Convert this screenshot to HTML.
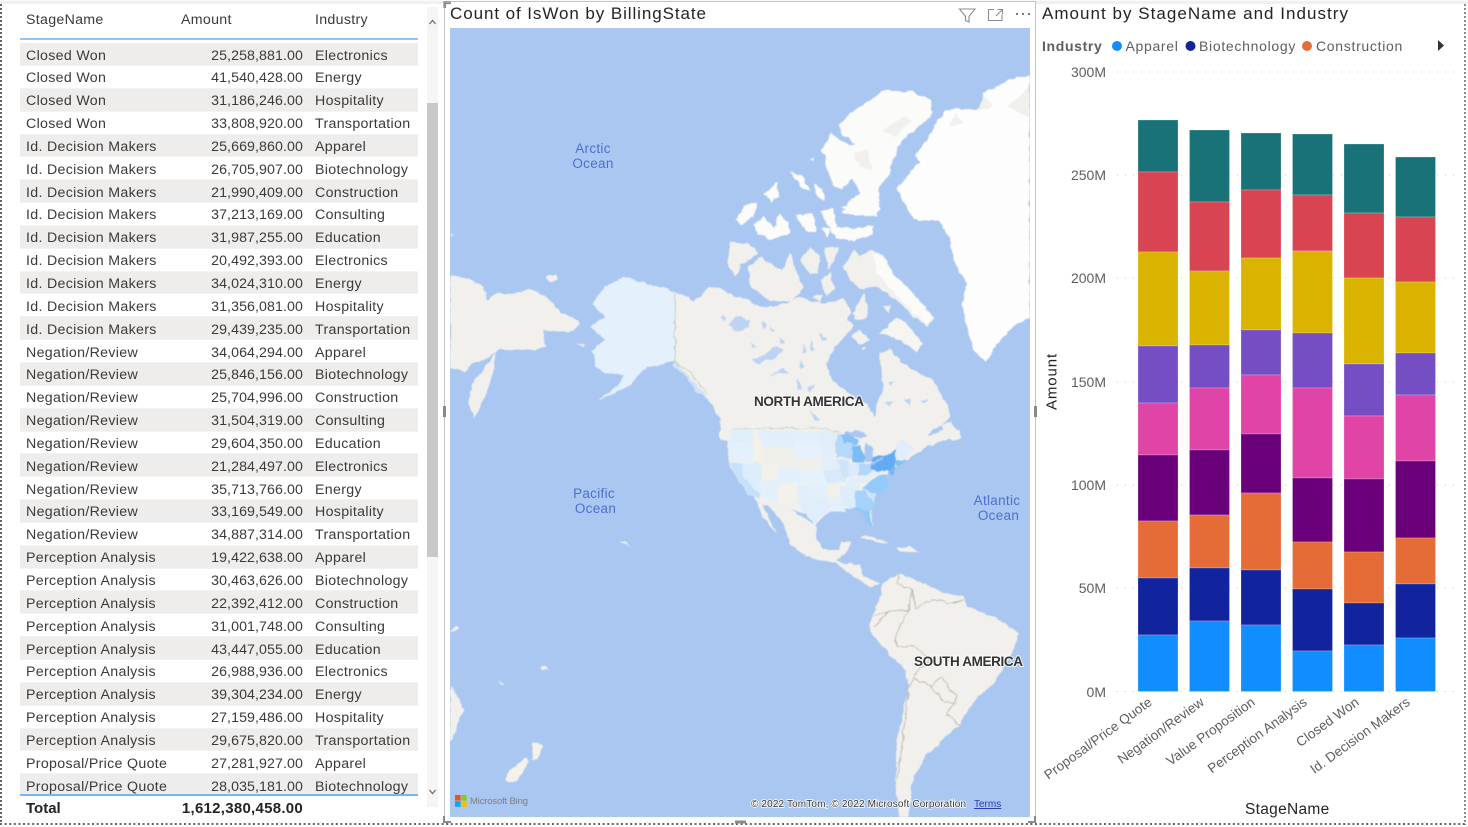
<!DOCTYPE html>
<html><head><meta charset="utf-8"><style>
html,body{margin:0;padding:0;background:#fff}
body{width:1468px;height:827px;position:relative;overflow:hidden;font-family:"Liberation Sans",sans-serif}
#t{position:absolute;left:20px;top:43.2px;width:398px;height:751px;overflow:hidden}
.r{height:22.85px;position:relative;font-size:14.2px;color:#3b3a39;line-height:23px;letter-spacing:.32px;white-space:nowrap;box-sizing:border-box;border-bottom:1px solid #f3f3f3}
.r.g{background:#eeedec}
.r b{font-weight:normal;position:absolute;top:1.4px}
.a{left:6px}.m{right:115px;letter-spacing:.09px}.c{left:295px}
.h{position:absolute;top:10.5px;font-size:14.2px;letter-spacing:.3px;color:#3b3a39;line-height:18px}
svg{position:absolute;left:0;top:0}
</style></head><body>
<div class="h" style="left:26px">StageName</div><div class="h" style="left:181px">Amount</div><div class="h" style="left:315px">Industry</div>
<div style="position:absolute;left:20px;top:37.5px;width:398px;height:2px;background:#8ec8fa"></div>
<div id="t">
<div class="r g"><b class="a">Closed Won</b><b class="m">25,258,881.00</b><b class="c">Electronics</b></div>
<div class="r"><b class="a">Closed Won</b><b class="m">41,540,428.00</b><b class="c">Energy</b></div>
<div class="r g"><b class="a">Closed Won</b><b class="m">31,186,246.00</b><b class="c">Hospitality</b></div>
<div class="r"><b class="a">Closed Won</b><b class="m">33,808,920.00</b><b class="c">Transportation</b></div>
<div class="r g"><b class="a">Id. Decision Makers</b><b class="m">25,669,860.00</b><b class="c">Apparel</b></div>
<div class="r"><b class="a">Id. Decision Makers</b><b class="m">26,705,907.00</b><b class="c">Biotechnology</b></div>
<div class="r g"><b class="a">Id. Decision Makers</b><b class="m">21,990,409.00</b><b class="c">Construction</b></div>
<div class="r"><b class="a">Id. Decision Makers</b><b class="m">37,213,169.00</b><b class="c">Consulting</b></div>
<div class="r g"><b class="a">Id. Decision Makers</b><b class="m">31,987,255.00</b><b class="c">Education</b></div>
<div class="r"><b class="a">Id. Decision Makers</b><b class="m">20,492,393.00</b><b class="c">Electronics</b></div>
<div class="r g"><b class="a">Id. Decision Makers</b><b class="m">34,024,310.00</b><b class="c">Energy</b></div>
<div class="r"><b class="a">Id. Decision Makers</b><b class="m">31,356,081.00</b><b class="c">Hospitality</b></div>
<div class="r g"><b class="a">Id. Decision Makers</b><b class="m">29,439,235.00</b><b class="c">Transportation</b></div>
<div class="r"><b class="a">Negation/Review</b><b class="m">34,064,294.00</b><b class="c">Apparel</b></div>
<div class="r g"><b class="a">Negation/Review</b><b class="m">25,846,156.00</b><b class="c">Biotechnology</b></div>
<div class="r"><b class="a">Negation/Review</b><b class="m">25,704,996.00</b><b class="c">Construction</b></div>
<div class="r g"><b class="a">Negation/Review</b><b class="m">31,504,319.00</b><b class="c">Consulting</b></div>
<div class="r"><b class="a">Negation/Review</b><b class="m">29,604,350.00</b><b class="c">Education</b></div>
<div class="r g"><b class="a">Negation/Review</b><b class="m">21,284,497.00</b><b class="c">Electronics</b></div>
<div class="r"><b class="a">Negation/Review</b><b class="m">35,713,766.00</b><b class="c">Energy</b></div>
<div class="r g"><b class="a">Negation/Review</b><b class="m">33,169,549.00</b><b class="c">Hospitality</b></div>
<div class="r"><b class="a">Negation/Review</b><b class="m">34,887,314.00</b><b class="c">Transportation</b></div>
<div class="r g"><b class="a">Perception Analysis</b><b class="m">19,422,638.00</b><b class="c">Apparel</b></div>
<div class="r"><b class="a">Perception Analysis</b><b class="m">30,463,626.00</b><b class="c">Biotechnology</b></div>
<div class="r g"><b class="a">Perception Analysis</b><b class="m">22,392,412.00</b><b class="c">Construction</b></div>
<div class="r"><b class="a">Perception Analysis</b><b class="m">31,001,748.00</b><b class="c">Consulting</b></div>
<div class="r g"><b class="a">Perception Analysis</b><b class="m">43,447,055.00</b><b class="c">Education</b></div>
<div class="r"><b class="a">Perception Analysis</b><b class="m">26,988,936.00</b><b class="c">Electronics</b></div>
<div class="r g"><b class="a">Perception Analysis</b><b class="m">39,304,234.00</b><b class="c">Energy</b></div>
<div class="r"><b class="a">Perception Analysis</b><b class="m">27,159,486.00</b><b class="c">Hospitality</b></div>
<div class="r g"><b class="a">Perception Analysis</b><b class="m">29,675,820.00</b><b class="c">Transportation</b></div>
<div class="r"><b class="a">Proposal/Price Quote</b><b class="m">27,281,927.00</b><b class="c">Apparel</b></div>
<div class="r g"><b class="a">Proposal/Price Quote</b><b class="m">28,035,181.00</b><b class="c">Biotechnology</b></div>
</div>
<div style="position:absolute;left:20px;top:794px;width:398px;height:2px;background:#73b8f5"></div>
<div style="position:absolute;left:26px;top:799.5px;font-size:15px;font-weight:bold;color:#252423;line-height:18px">Total</div>
<div style="position:absolute;right:1165px;top:799.5px;font-size:15px;font-weight:bold;color:#252423;line-height:18px;letter-spacing:.27px">1,612,380,458.00</div>
<svg width="1468" height="827" viewBox="0 0 1468 827" font-family="Liberation Sans, sans-serif">
<defs>
<clipPath id="mc"><rect x="450" y="28" width="580" height="789"/></clipPath>
<filter id="wob" filterUnits="userSpaceOnUse" x="450" y="28" width="580" height="789" color-interpolation-filters="sRGB">
<feTurbulence type="fractalNoise" baseFrequency=".13" numOctaves="3" seed="4" result="n"/>
<feDisplacementMap in="SourceGraphic" in2="n" scale="4.5" xChannelSelector="R" yChannelSelector="G" result="d"/>
<feGaussianBlur in="d" stdDeviation=".45"/>
</filter>
</defs>
<!-- frame -->
<rect x="0" y="0" width="1468" height="4" fill="#f0f0f0"/>
<rect x="0" y="0" width="1468" height="1" fill="#fafafa"/>
<line x1="1" y1="4" x2="1" y2="825" stroke="#666" stroke-width="2" stroke-dasharray="2 2"/>
<line x1="0" y1="824" x2="1466" y2="824" stroke="#666" stroke-width="2" stroke-dasharray="2 2.6"/>
<line x1="1465" y1="4" x2="1465" y2="825" stroke="#666" stroke-width="1.5" stroke-dasharray="2 2"/>
<!-- scrollbar -->
<rect x="427" y="7" width="11" height="800" fill="#f5f5f5"/>
<rect x="427" y="103" width="11" height="454" fill="#c8c8c8"/>
<path d="M429.5 24l3-3.6 3 3.6" fill="none" stroke="#666" stroke-width="1.2"/>
<path d="M429.5 790l3 3.6 3-3.6" fill="none" stroke="#666" stroke-width="1.2"/>
<!-- map frame -->
<rect x="444" y="2" width="592" height="820" fill="#fff"/>
<path d="M444.5 2V820M1035.5 2V820M444 1.5H1036" stroke="#c2c2c2" fill="none"/>
<path d="M444 8V2H451M444 3.5H451M445.5 3V8" stroke="#8a8a8a" fill="none" stroke-width="1.2"/>
<path d="M444 816V822H451M1035 816V822H1028" stroke="#8a8a8a" fill="none" stroke-width="2"/>
<path d="M444.5 406V417M1035.5 406V417" stroke="#8a8a8a" fill="none" stroke-width="3"/>
<path d="M735 822H746" stroke="#8a8a8a" fill="none" stroke-width="3"/>
<text x="450" y="19" font-size="17" fill="#252423" letter-spacing=".92">Count of IsWon by BillingState</text>
<!-- header icons -->
<path d="M959.5 9H975L969 16.5V22L965.5 20.5V16.5Z" fill="none" stroke="#8d8d8d" stroke-width="1.1"/>
<path d="M994 9.5H988.5V20.5H1002V14.5M996 16L1002 10M997.5 9.5H1002.5V14" fill="none" stroke="#8d8d8d" stroke-width="1.1"/>
<g fill="#777"><rect x="1016" y="13" width="2" height="2"/><rect x="1022" y="13" width="2" height="2"/><rect x="1028" y="13" width="2" height="2"/></g>
<!-- map -->
<g clip-path="url(#mc)">
<rect x="450" y="28" width="580" height="789" fill="#aac7f1"/>
<g filter="url(#wob)">
<g transform="translate(450,30) scale(.3697,.3333)">
<!-- Greenland -->
<path d="M1568 135L1510 150 1470 175 1440 190 1450 215 1425 240 1400 235 1340 240 1310 285 1290 330 1260 370 1270 395 1250 420 1210 475 1240 540 1260 570 1320 570 1350 620 1365 700 1400 760 1385 830 1400 900 1415 960 1450 995 1470 960 1510 900 1568 860Z" fill="#fdfdfd"/>
<path d="M1510 230l58-60v90l-30-10zM1440 195l30 30-40 20zM1370 250l20 30-40 10z" fill="#f1f0ec"/>
<!-- Ellesmere -->
<path d="M1050 285L1095 240 1130 215 1170 182 1250 185 1300 210 1305 250 1270 290 1220 335 1195 395 1190 430 1160 470 1160 540 1110 555 1060 550 1080 510 1110 490 1090 445 1060 475 1035 465 1005 360 1030 310 1070 340 1100 345 1060 310Z" fill="#fbfbfa"/>
<path d="M1170 300l60-40 20 10-50 50zM1090 370l40-10 10 60-30-10z" fill="#f1f0ec"/>
<path d="M850 490l35-35 5 45-20 15zM920 425l30 10 25 50-25-15zM985 460l20 15 10 40-25-20zM975 385l8-5 0 15z" fill="#fbfbf9"/>
<!-- Alaska -->
<path d="M385 820L420 770 470 740 560 770 610 785 610 990 565 1005 520 1020 490 1065 400 1112 460 1060 470 1035 420 1030 395 1010 385 960 420 930 375 890 420 860Z" fill="#e4f0fb"/>
<path d="M610 990L650 1020 700 1090 700 1110 670 1090 640 1040 600 1005Z" fill="#cfe4f8"/>
<!-- Russia -->
<path d="M0 735L50 745 90 770 100 810 130 790 180 790 220 775 270 810 300 850 330 860 350 880 330 905 300 905 250 900 260 950 220 960 130 960 100 985 60 1000 40 1025 0 1015Z" fill="#f1f0ec"/>
<path d="M125 965L100 1005 60 1060 50 1120 65 1165 95 1100 120 1015Z" fill="#f1f0ec"/>
<path d="M258 740l30-5 0 15-20 5zM340 935l25 10-5 5zM0 610l8 5-8 8z" fill="#f1f0ec"/>
</g>
<!-- Canada west link -->
<path d="M675 292L694 301 709 287 722 288V440H733L705 395 676 362Z" fill="#f1f0ec"/>
<g transform="translate(720,200) scale(.3333)">
<!-- Canada mainland, coast traced around Hudson Bay -->
<path d="M0 265L40 285 80 295 120 320 170 320 200 310 240 290 280 305 320 310 370 295 395 340 380 360 400 375 375 410 345 440 320 490 335 540 400 590 445 620 465 650 472 600 490 570 480 460 510 450 550 490 600 520 640 540 690 630 690 650 660 680 610 710 720 690 720 720 0 720Z" fill="#f1f0ec"/>
<path d="M370 200L400 150 420 170 455 150 490 165 520 220 580 280 640 350 625 380 580 350 530 300 470 260 420 265 385 235Z" fill="#f1f0ec"/>
<path d="M455 155L490 170 520 222 580 282 636 350 622 376 580 340 530 285 470 215Z" fill="#fbfbf9"/>
<path d="M480 400L530 350 560 370 610 430 590 455 540 420Z" fill="#f6f5f1"/>
<path d="M85 200L125 170 185 215 210 155 250 265 215 305 150 305 90 255Z" fill="#f1f0ec"/>
<path d="M20 190L30 125 85 130 115 160 65 195 45 230Z" fill="#f1f0ec"/>
<path d="M240 180L270 140 300 170 295 220 270 225ZM310 145L358 140 340 190 325 210ZM300 240L330 215 345 270 320 285ZM280 290L305 285 300 310ZM395 410L420 390 450 420 420 435ZM400 340L430 280 445 320 440 355 405 360ZM490 320L510 315 505 340ZM425 445L440 440 435 455Z" fill="#f1f0ec"/>
<path d="M45 60L75 15 110 10 100 50 65 75ZM100 75L130 50 165 85 175 40 205 70 210 100 150 120 115 100ZM225 45L280 40 290 95 265 100ZM305 85L330 85 325 115ZM300 30L340 25 350 80 400 85 460 75 460 105 400 120 345 115ZM365 20L480 0 470 50 400 45Z" fill="#fbfbf9"/>
<!-- lakes -->
<path d="M25 375L50 350 90 360 85 385 50 395ZM95 480L130 465 170 440 190 450 160 475 120 490ZM145 530L190 505 210 520 170 522ZM230 530L250 570 235 565ZM125 365L140 375 130 390ZM150 375L165 395 155 400ZM180 410L195 430 180 430ZM90 425L110 440 95 445ZM250 430L260 455 245 460ZM270 420L285 450 272 455ZM300 400L320 415 305 425ZM270 630L300 660 285 665ZM265 560L285 550 270 580ZM490 610L520 605 510 620ZM550 600L575 595 570 620ZM600 605L625 600 610 612ZM505 545L525 545 510 555ZM240 480L255 500 240 505Z" fill="#bdd3f3"/>
<path d="M0 355L10 345 20 355 10 360Z" fill="#bdd3f3"/>
</g>
<g transform="translate(450,420) scale(.3697,.3333)">
<!-- North America south -->
<path d="M725 0L765 25 755 120 760 150 800 210 830 245 860 250 920 270 990 315 990 350 1010 390 1050 390 1060 365 1085 365 1070 400 1045 420 1065 432 1110 430 1115 465 1165 490 1140 502 1090 470 1040 430 970 410 925 380 900 310 860 255 845 255 885 340 845 290 830 245 800 210 755 130 750 60 725 0Z" fill="#f1f0ec"/>
<path d="M765 25L1010 25 1140 120 1190 95 1270 60 1330 30 1355 10 1385 55 1330 60 1310 70 1260 100 1230 125 1190 150 1180 170 1120 220 1140 260 1145 325 1130 320 1120 265 1080 265 1060 270 1020 280 990 315 960 280 920 270 860 250 830 245 800 210 760 150 755 120Z" fill="#f1f0ec"/>
<path d="M760 0H1300L1290 70 1190 95 1140 120 1010 25H765Z" fill="#f1f0ec"/>
<path d="M1330 15l25-10 30 50-45-15z" fill="#f1f0ec"/>
<path d="M1105 352l25-5 40 15 20 12-35-8zM1205 385l35-5 30 15-50 0z" fill="#f1f0ec"/>
<path d="M458 362l20 5 8 14-14-8z" fill="#f1f0ec"/>
<path d="M245 745l15-5 5 5-15 8zM130 782l15 10-5 4zM0 630l20-10 5 10-15 5z" fill="#f1f0ec"/>
<!-- South America -->
<path d="M1215 460L1170 490 1160 540 1140 590 1135 630 1170 680 1230 750 1240 800 1210 960 1205 1080 1215 1191 1240 1191 1250 1080 1290 1000 1320 980 1345 940 1375 920 1420 840 1470 790 1520 700 1540 640 1490 600 1400 560 1390 530 1340 520 1280 490Z" fill="#f1f0ec"/>
<path d="M1215 460L1210 490 1250 510 1260 565 1290 545 1330 540 1345 550 1390 540M1250 510L1240 570 1205 650 1210 680 1260 680 1295 720 1260 760 1240 800 1225 950 1210 1080M1140 590L1185 575 1240 570M1150 620L1185 575M1250 770L1300 800 1330 770 1370 830 1345 885 1380 915M1300 800L1340 850H1370" fill="none" stroke="#b8b5ae" stroke-width="2.5"/>
<!-- Aus/NZ -->
<path d="M0 800L25 835 35 870 20 920 0 975Z" fill="#f1f0ec"/>
<path d="M225 970L250 975 240 1015 220 1020ZM205 1012L215 1025 190 1065 180 1085 150 1085 155 1060Z" fill="#f4f2ea"/>
</g>
<!-- USA -->
<g transform="translate(700,380) scale(.3333)">
<path d="M90 150H160V190H88Z" fill="#dfeefb"/>
<path d="M88 190L160 192V245H88Z" fill="#e4f0fb"/>
<path d="M88 248L130 250V295L180 340 175 360 145 345 105 290Z" fill="#c6e2fb"/>
<path d="M130 250H185V320L178 335 130 295Z" fill="#dceefb"/>
<path d="M160 150H175L190 205V250L160 245Z" fill="#f2f1ea"/>
<path d="M170 150L285 152V205H190Z" fill="#e2effb"/>
<path d="M190 205H285V262L190 250Z" fill="#f0f0ea"/>
<path d="M185 250L235 260V300H185Z" fill="#f2f1ea"/>
<path d="M180 300H235V368L210 365 178 345Z" fill="#e3f0fb"/>
<path d="M235 262H300V310H235Z" fill="#e3effa"/>
<path d="M235 312H295V365L235 368Z" fill="#f3f1e9"/>
<path d="M285 152L360 155 365 195H285Z" fill="#e3effb"/>
<path d="M285 195H365V235H285Z" fill="#e7f1fb"/>
<path d="M285 235H365L370 272H300V262H285Z" fill="#f0f0ea"/>
<path d="M300 272H375L380 315 300 312Z" fill="#e6f2fb"/>
<path d="M300 315H380L385 355 325 345V318Z" fill="#e3f0fb"/>
<path d="M295 315L325 318V345L385 355 390 395 350 420 345 435 320 405 295 370 270 365 295 365Z" fill="#dfeefa"/>
<path d="M358 150L420 160 400 195 405 230 365 230Z" fill="#e0eefb"/>
<path d="M365 232H412L420 262 370 268Z" fill="#e1eefb"/>
<path d="M372 270L420 265 440 305 380 312Z" fill="#d8e9fa"/>
<path d="M382 315L425 310 420 350 385 355Z" fill="#f1f0e9"/>
<path d="M388 358L420 352V380L440 395H392Z" fill="#e4f0fb"/>
<path d="M412 240H445L448 280 435 300 420 270Z" fill="#cfe4fa"/>
<path d="M415 165H440L470 205 455 235 412 232 405 195Z" fill="#b5d9f9"/>
<path d="M420 165L445 160 475 182 470 195 440 185 430 190Z" fill="#86c1f7"/>
<path d="M458 195L480 195 497 235 490 247H455Z" fill="#7cbcf6"/>
<path d="M445 250H475V285L448 295Z" fill="#dceafa"/>
<path d="M475 250H515V275L490 290 475 285Z" fill="#b3d7f9"/>
<path d="M440 300L480 288 515 280 505 300 440 320Z" fill="#e2eefb"/>
<path d="M420 320L480 315 470 385 420 380Z" fill="#dfedfb"/>
<path d="M465 335L490 330 525 370 510 390 470 385Z" fill="#a5d2f9"/>
<path d="M448 382L510 390 518 445 505 440 490 405 475 392Z" fill="#8fc8f8"/>
<path d="M490 330L530 335 520 368Z" fill="#cde3fa"/>
<path d="M485 325L530 290 560 280 565 320 540 345 495 330Z" fill="#93caf9"/>
<path d="M500 290L520 270 560 280Z" fill="#e3effb"/>
<path d="M515 232L530 228 570 225 585 205V245L578 285 565 272H515Z" fill="#62abf4"/>
<path d="M585 195L610 175 640 205 610 240H585Z" fill="#e0eefb"/>
<path d="M585 243L615 240V250L585 260Z" fill="#80bff7"/>
<path d="M570 270L580 262 572 290Z" fill="#80bff7"/>
<path d="M425 160L470 150 505 165 480 176 440 163ZM495 190L520 205 515 245 495 245ZM510 250L545 230 550 235 520 255Z" fill="#aac7f1"/>
<path d="M100 145H365L420 158" fill="none" stroke="#c9c4b8" stroke-width="2"/>
</g>
<path d="M675 292V362L690 372 708 395" fill="none" stroke="#c9c4b8" stroke-width=".8"/>
</g>
<!-- Bing logo -->
<rect x="455" y="795" width="5.6" height="5.6" fill="#f1511b"/><rect x="461.2" y="795" width="5.6" height="5.6" fill="#80cc28"/><rect x="455" y="801.2" width="5.6" height="5.6" fill="#00adef"/><rect x="461.2" y="801.2" width="5.6" height="5.6" fill="#fbbc09"/>
<g fill="#4d70cf" font-size="13.5" text-anchor="middle" letter-spacing=".3">
<text x="593" y="153">Arctic</text><text x="593" y="168">Ocean</text>
<text x="594" y="498">Pacific</text><text x="595.5" y="513">Ocean</text>
<text x="997" y="505">Atlantic</text><text x="998.5" y="520">Ocean</text>
</g>
<g font-size="13.5" font-weight="bold" fill="#333" stroke="#fff" stroke-width="2" paint-order="stroke" stroke-opacity=".75">
<text x="754" y="406" textLength="110">NORTH AMERICA</text>
<text x="914" y="666" textLength="109">SOUTH AMERICA</text>
</g>
<text x="470" y="804" font-size="9.5" fill="#7e7e7e" textLength="58">Microsoft Bing</text>
<text x="751" y="807" font-size="10" fill="#333" stroke="#fff" stroke-width="1.5" paint-order="stroke" textLength="215">© 2022 TomTom, © 2022 Microsoft Corporation</text>
<text x="974" y="807" font-size="10" fill="#2a3fb0" text-decoration="underline">Terms</text>
</g>
<!-- chart -->
<text x="1042" y="19" font-size="17" fill="#252423" letter-spacing="1.03">Amount by StageName and Industry</text>
<text x="1042" y="51" font-size="14" font-weight="bold" fill="#605e5c" letter-spacing=".65">Industry</text>
<circle cx="1117" cy="46" r="5" fill="#118dff"/><text x="1125.5" y="51" font-size="14" fill="#605e5c" letter-spacing=".68">Apparel</text>
<circle cx="1190.5" cy="46" r="5" fill="#12239e"/><text x="1199" y="51" font-size="14" fill="#605e5c" letter-spacing=".7">Biotechnology</text>
<circle cx="1307" cy="46" r="5" fill="#e66c37"/><text x="1316" y="51" font-size="14" fill="#605e5c" letter-spacing=".7">Construction</text>
<path d="M1438 40L1444 45.5 1438 51Z" fill="#333"/>
<g stroke="#c8c6c4" stroke-dasharray="1 7" stroke-width="1">
<line x1="1117" y1="72" x2="1457" y2="72"/><line x1="1117" y1="175" x2="1457" y2="175"/><line x1="1117" y1="278" x2="1457" y2="278"/><line x1="1117" y1="382" x2="1457" y2="382"/><line x1="1117" y1="485" x2="1457" y2="485"/><line x1="1117" y1="588" x2="1457" y2="588"/><line x1="1117" y1="691.5" x2="1457" y2="691.5"/>
</g>
<g font-size="14" fill="#605e5c" text-anchor="end">
<text x="1106" y="77">300M</text><text x="1106" y="180">250M</text><text x="1106" y="283">200M</text><text x="1106" y="387">150M</text><text x="1106" y="490">100M</text><text x="1106" y="593">50M</text><text x="1106" y="697">0M</text>
</g>
<!-- bars -->
<g stroke="#fff" stroke-opacity=".22" stroke-width="1">
<rect x="1138" y="120" width="40" height="52" fill="#197278"/><rect x="1138" y="172" width="40" height="80" fill="#d94452"/><rect x="1138" y="252" width="40" height="94" fill="#d9b300"/><rect x="1138" y="346" width="40" height="57" fill="#744ec2"/><rect x="1138" y="403" width="40" height="52" fill="#e044a7"/><rect x="1138" y="455" width="40" height="66" fill="#6b007b"/><rect x="1138" y="521" width="40" height="57" fill="#e66c37"/><rect x="1138" y="578" width="40" height="57" fill="#12239e"/><rect x="1138" y="635" width="40" height="56.5" fill="#118dff"/>
<rect x="1189.5" y="130" width="40" height="72" fill="#197278"/><rect x="1189.5" y="202" width="40" height="69" fill="#d94452"/><rect x="1189.5" y="271" width="40" height="74" fill="#d9b300"/><rect x="1189.5" y="345" width="40" height="43" fill="#744ec2"/><rect x="1189.5" y="388" width="40" height="62" fill="#e044a7"/><rect x="1189.5" y="450" width="40" height="65" fill="#6b007b"/><rect x="1189.5" y="515" width="40" height="53" fill="#e66c37"/><rect x="1189.5" y="568" width="40" height="53" fill="#12239e"/><rect x="1189.5" y="621" width="40" height="70.5" fill="#118dff"/>
<rect x="1241" y="133" width="40" height="57" fill="#197278"/><rect x="1241" y="190" width="40" height="68" fill="#d94452"/><rect x="1241" y="258" width="40" height="72" fill="#d9b300"/><rect x="1241" y="330" width="40" height="45" fill="#744ec2"/><rect x="1241" y="375" width="40" height="59" fill="#e044a7"/><rect x="1241" y="434" width="40" height="59" fill="#6b007b"/><rect x="1241" y="493" width="40" height="77" fill="#e66c37"/><rect x="1241" y="570" width="40" height="55" fill="#12239e"/><rect x="1241" y="625" width="40" height="66.5" fill="#118dff"/>
<rect x="1292.5" y="134" width="40" height="61" fill="#197278"/><rect x="1292.5" y="195" width="40" height="56" fill="#d94452"/><rect x="1292.5" y="251" width="40" height="82" fill="#d9b300"/><rect x="1292.5" y="333" width="40" height="55" fill="#744ec2"/><rect x="1292.5" y="388" width="40" height="90" fill="#e044a7"/><rect x="1292.5" y="478" width="40" height="64" fill="#6b007b"/><rect x="1292.5" y="542" width="40" height="47" fill="#e66c37"/><rect x="1292.5" y="589" width="40" height="62" fill="#12239e"/><rect x="1292.5" y="651" width="40" height="40.5" fill="#118dff"/>
<rect x="1344" y="144" width="40" height="69" fill="#197278"/><rect x="1344" y="213" width="40" height="65" fill="#d94452"/><rect x="1344" y="278" width="40" height="86" fill="#d9b300"/><rect x="1344" y="364" width="40" height="52" fill="#744ec2"/><rect x="1344" y="416" width="40" height="63" fill="#e044a7"/><rect x="1344" y="479" width="40" height="73" fill="#6b007b"/><rect x="1344" y="552" width="40" height="51" fill="#e66c37"/><rect x="1344" y="603" width="40" height="42" fill="#12239e"/><rect x="1344" y="645" width="40" height="46.5" fill="#118dff"/>
<rect x="1395.5" y="157" width="40" height="60" fill="#197278"/><rect x="1395.5" y="217" width="40" height="65" fill="#d94452"/><rect x="1395.5" y="282" width="40" height="71" fill="#d9b300"/><rect x="1395.5" y="353" width="40" height="42" fill="#744ec2"/><rect x="1395.5" y="395" width="40" height="66" fill="#e044a7"/><rect x="1395.5" y="461" width="40" height="77" fill="#6b007b"/><rect x="1395.5" y="538" width="40" height="46" fill="#e66c37"/><rect x="1395.5" y="584" width="40" height="54" fill="#12239e"/><rect x="1395.5" y="638" width="40" height="53.5" fill="#118dff"/>
</g>
<g font-size="13.5" fill="#605e5c" text-anchor="end" letter-spacing=".05">
<text transform="translate(1153,704) rotate(-36)">Proposal/Price Quote</text>
<text transform="translate(1205,704) rotate(-36)">Negation/Review</text>
<text transform="translate(1256,704) rotate(-36)">Value Proposition</text>
<text transform="translate(1308,704) rotate(-36)">Perception Analysis</text>
<text transform="translate(1360,704) rotate(-36)">Closed Won</text>
<text transform="translate(1411,704) rotate(-36)">Id. Decision Makers</text>
</g>
<text x="1245" y="814" font-size="15.5" fill="#252423" letter-spacing=".3">StageName</text>
<text transform="translate(1056.5,410) rotate(-90)" font-size="15" fill="#252423" letter-spacing=".9">Amount</text>
</svg>
</body></html>
